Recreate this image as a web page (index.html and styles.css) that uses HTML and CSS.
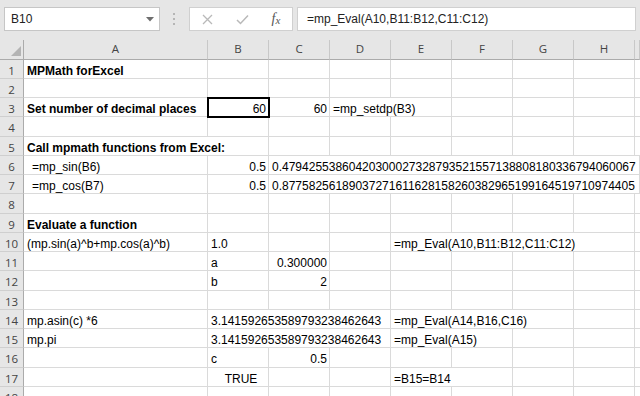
FILE: index.html
```html
<!DOCTYPE html>
<html>
<head>
<meta charset="utf-8">
<link rel="stylesheet" href="styles.css">
</head>
<body>
<div class="fbar">
  <div class="namebox"><span>B10</span><svg width="8" height="5" viewBox="0 0 8 5"><path d="M0 0h8L4 4.5z" fill="#6e6e6e"/></svg></div>
  <div class="grip"><svg width="3" height="12" viewBox="0 0 3 12"><rect x="0" y="0" width="2" height="2" fill="#b5b5b5"/><rect x="0" y="5" width="2" height="2" fill="#b5b5b5"/><rect x="0" y="10" width="2" height="2" fill="#b5b5b5"/></svg></div>
  <div class="btns">
    <span class="slot"><svg width="11" height="11" viewBox="0 0 11 11"><path d="M1 1L10 10M10 1L1 10" stroke="#b9b9b9" stroke-width="1.3"/></svg></span>
    <span class="slot"><svg width="13" height="11" viewBox="0 0 13 11"><path d="M1 6L4.5 9.5L12 1.5" stroke="#b9b9b9" stroke-width="1.5" fill="none"/></svg></span>
    <span class="slot fx">f<span class="fxx">x</span></span>
  </div>
  <div class="formula">=mp_Eval(A10,B11:B12,C11:C12)</div>
</div>
<div class="sheet">
  <div class="ch corner"><svg width="10" height="10" viewBox="0 0 10 10"><path d="M10 0V10H0z" fill="#b4b4b4"/></svg></div>
  <div class="ch">A</div><div class="ch">B</div><div class="ch">C</div><div class="ch">D</div><div class="ch">E</div><div class="ch">F</div><div class="ch">G</div><div class="ch">H</div><div class="ch"></div>

  <div class="rh">1</div><div class="c b">MPMath forExcel</div><div class="c"></div><div class="c"></div><div class="c"></div><div class="c"></div><div class="c"></div><div class="c"></div><div class="c"></div><div class="c"></div>

  <div class="rh">2</div><div class="c"></div><div class="c"></div><div class="c"></div><div class="c"></div><div class="c"></div><div class="c"></div><div class="c"></div><div class="c"></div><div class="c"></div>

  <div class="rh">3</div><div class="c b">Set number of decimal places</div><div class="c r sel">60</div><div class="c r">60</div><div class="c s2">=mp_setdp(B3)</div><div class="c"></div><div class="c"></div><div class="c"></div><div class="c"></div>

  <div class="rh">4</div><div class="c"></div><div class="c"></div><div class="c"></div><div class="c"></div><div class="c"></div><div class="c"></div><div class="c"></div><div class="c"></div><div class="c"></div>

  <div class="rh">5</div><div class="c b s2">Call mpmath functions from Excel:</div><div class="c"></div><div class="c"></div><div class="c"></div><div class="c"></div><div class="c"></div><div class="c"></div><div class="c"></div>

  <div class="rh">6</div><div class="c ind">=mp_sin(B6)</div><div class="c r">0.5</div><div class="c s7">0.47942553860420300027328793521557138808180336794060067</div>

  <div class="rh">7</div><div class="c ind">=mp_cos(B7)</div><div class="c r">0.5</div><div class="c s7">0.87758256189037271611628158260382965199164519710974405</div>

  <div class="rh">8</div><div class="c"></div><div class="c"></div><div class="c"></div><div class="c"></div><div class="c"></div><div class="c"></div><div class="c"></div><div class="c"></div><div class="c"></div>

  <div class="rh">9</div><div class="c b">Evaluate a function</div><div class="c"></div><div class="c"></div><div class="c"></div><div class="c"></div><div class="c"></div><div class="c"></div><div class="c"></div><div class="c"></div>

  <div class="rh">10</div><div class="c">(mp.sin(a)^b+mp.cos(a)^b)</div><div class="c">1.0</div><div class="c"></div><div class="c"></div><div class="c s4">=mp_Eval(A10,B11:B12,C11:C12)</div><div class="c"></div>

  <div class="rh">11</div><div class="c"></div><div class="c">a</div><div class="c r">0.300000</div><div class="c"></div><div class="c"></div><div class="c"></div><div class="c"></div><div class="c"></div><div class="c"></div>

  <div class="rh">12</div><div class="c"></div><div class="c">b</div><div class="c r">2</div><div class="c"></div><div class="c"></div><div class="c"></div><div class="c"></div><div class="c"></div><div class="c"></div>

  <div class="rh">13</div><div class="c"></div><div class="c"></div><div class="c"></div><div class="c"></div><div class="c"></div><div class="c"></div><div class="c"></div><div class="c"></div><div class="c"></div>

  <div class="rh">14</div><div class="c">mp.asin(c) *6</div><div class="c s3">3.141592653589793238462643</div><div class="c s3">=mp_Eval(A14,B16,C16)</div><div class="c"></div><div class="c"></div>

  <div class="rh">15</div><div class="c">mp.pi</div><div class="c s3">3.141592653589793238462643</div><div class="c s2">=mp_Eval(A15)</div><div class="c"></div><div class="c"></div><div class="c"></div>

  <div class="rh">16</div><div class="c"></div><div class="c">c</div><div class="c r">0.5</div><div class="c"></div><div class="c"></div><div class="c"></div><div class="c"></div><div class="c"></div><div class="c"></div>

  <div class="rh">17</div><div class="c"></div><div class="c ctr">TRUE</div><div class="c"></div><div class="c"></div><div class="c s2">=B15=B14</div><div class="c"></div><div class="c"></div><div class="c"></div>

  <div class="rh">18</div><div class="c"></div><div class="c"></div><div class="c"></div><div class="c"></div><div class="c"></div><div class="c"></div><div class="c"></div><div class="c"></div><div class="c"></div>
</div>
</body>
</html>
```
FILE: styles.css
```css
* { box-sizing: border-box; }
html, body { margin: 0; padding: 0; }
body {
  width: 640px;
  height: 396px;
  overflow: hidden;
  background: #ffffff;
  font-family: "Liberation Sans", Arial, sans-serif;
}
.fbar {
  display: flex;
  height: 40px;
  background: #e6e6e6;
  padding: 7px 4px 9px 4px;
}
.namebox {
  width: 156px;
  background: #fff;
  border: 1px solid #c6c6c6;
  display: flex;
  align-items: center;
  justify-content: space-between;
  padding: 0 5px 0 6px;
  font-size: 12px;
  color: #222;
}
.grip {
  width: 29px;
  display: flex;
  align-items: center;
  justify-content: center;
}
.btns {
  width: 104px;
  background: #fff;
  border: 1px solid #d0d0d0;
  display: flex;
  align-items: center;
}
.slot {
  width: 35px;
  display: flex;
  justify-content: center;
  align-items: center;
}
.slot.fx {
  width: 32px;
  font-family: "Liberation Serif", "Times New Roman", serif;
  font-style: italic;
  font-size: 14px;
  color: #555;
}
.fxx {
  font-size: 11px;
  position: relative;
  top: 1px;
}
.formula {
  flex: 1;
  margin-left: 4px;
  background: #fff;
  border: 1px solid #d0d0d0;
  padding-left: 9px;
  font-size: 12px;
  line-height: 22px;
  color: #222;
}
.sheet {
  display: grid;
  grid-template-columns: 24px 184px repeat(7, 61px) 5px;
  grid-template-rows: 19.5px;
  grid-auto-rows: 19.25px;
}
.ch {
  background: #e6e6e6;
  border-right: 1px solid #c8c8c8;
  border-bottom: 1px solid #ababab;
  text-align: center;
  font-family: "Open Sans", "Noto Sans", sans-serif;
  font-size: 11.5px;
  line-height: 18px;
  color: #444;
}
.corner {
  display: flex;
  align-items: flex-end;
  justify-content: flex-end;
  padding: 0 2px 3px 0;
  border-right: 1px solid #ababab;
}
.rh {
  background: #e6e6e6;
  border-right: 1px solid #ababab;
  border-bottom: 1px solid #cfcfcf;
  text-align: center;
  font-family: "Open Sans", "Noto Sans", sans-serif;
  font-size: 11.5px;
  line-height: 17px;
  padding-top: 2px;
  color: #444;
}
.c {
  border-right: 1px solid #dadada;
  border-bottom: 1px solid #dadada;
  padding: 3px 2px 0 3px;
  font-size: 12px;
  line-height: 16px;
  white-space: nowrap;
  overflow: hidden;
  color: #000;
}
.b { font-weight: bold; }
.r { text-align: right; }
.ctr { text-align: center; padding-left: 8px; }
.ind { padding-left: 8px; }
.s2 { grid-column: span 2; }
.s3 { grid-column: span 3; }
.s4 { grid-column: span 4; }
.s7 { grid-column: span 7; }
.sel {
  position: relative;
  z-index: 1;
  outline: 2px solid #000;
  outline-offset: -1px;
}
```
